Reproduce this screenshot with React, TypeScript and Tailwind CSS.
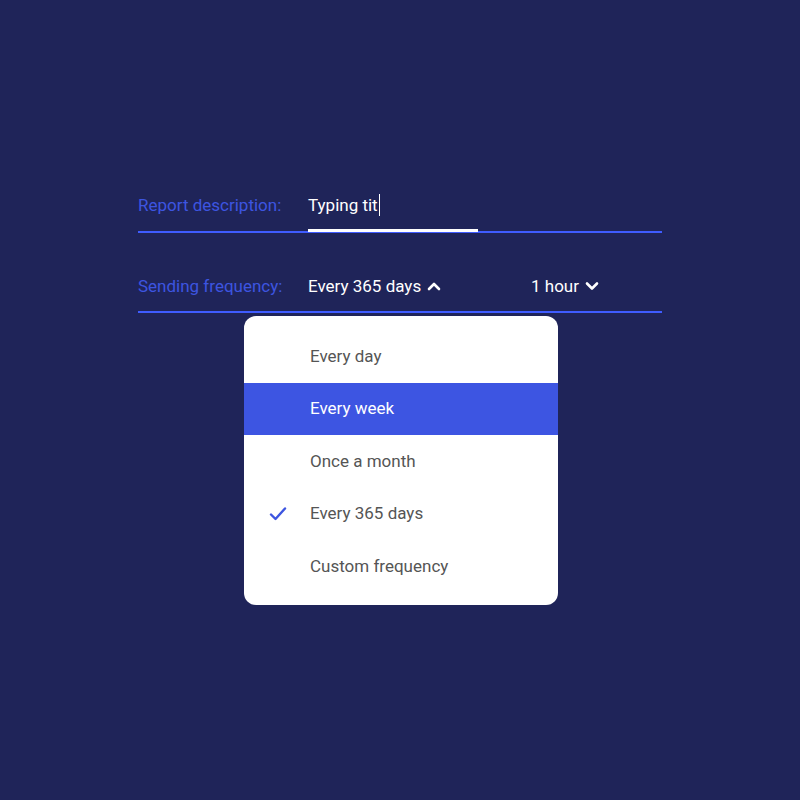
const options = ["Every day", "Every week", "Once a month", "Every 365 days", "Custom frequency"];

function ChevronUp() {
  return (
    <svg width="14" height="10" viewBox="0 0 14 10" fill="none">
      <path d="M2 8 L7 3 L12 8" stroke="white" strokeWidth="2.6" strokeLinecap="round" strokeLinejoin="round" />
    </svg>
  );
}

function ChevronDown() {
  return (
    <svg width="14" height="10" viewBox="0 0 14 10" fill="none">
      <path d="M2 2.5 L7 7.5 L12 2.5" stroke="white" strokeWidth="2.6" strokeLinecap="round" strokeLinejoin="round" />
    </svg>
  );
}

function Check() {
  return (
    <svg width="18" height="16" viewBox="0 0 18 16" fill="none">
      <path d="M2 8.5 L6.5 13 L16 2.5" stroke="#3d55e0" strokeWidth="2.4" strokeLinecap="round" strokeLinejoin="round" />
    </svg>
  );
}

export default function App() {
  return (
    <div
      className="h-[800px] w-[800px] bg-[#1f2459] pt-[193px] pl-[138px]"
      style={{ fontFamily: "Roboto, 'Liberation Sans', sans-serif" }}
    >
      <div className="w-[524px]">
        <div className="flex h-[38px] items-start text-[17px] leading-6">
          <div className="w-[170px] text-[#3d55e0]">Report description:</div>
          <div className="relative flex h-[38px] w-[170px] items-start text-white">
            <span>Typing tit</span>
            <span className="mt-[1px] ml-[1px] h-[22px] w-[1px] bg-white"></span>
            <span className="absolute -bottom-[1px] left-0 h-[3px] w-[170px] bg-white"></span>
          </div>
        </div>
        <div className="h-[1.5px] bg-[#3f5cff]"></div>
        <div className="flex h-[78.5px] items-start pt-[41px] text-[17px] leading-6">
          <div className="w-[170px] text-[#3d55e0]">Sending frequency:</div>
          <div className="flex w-[223px] items-center gap-[6px] text-white">
            <span>Every 365 days</span>
            <ChevronUp />
          </div>
          <div className="flex items-center gap-[6px] text-white">
            <span>1 hour</span>
            <ChevronDown />
          </div>
        </div>
        <div className="h-[1.5px] bg-[#3f5cff]"></div>
        <div className="mt-[3.5px] ml-[106px] w-[314px] rounded-[12px] bg-white pt-[14px] pb-[12px]">
          {options.map((opt) => (
            <div
              key={opt}
              className={
                opt === "Every week"
                  ? "flex h-[52.5px] items-center bg-[#3d55e2] text-[17px] text-white"
                  : "flex h-[52.5px] items-center text-[17px] text-[#555555]"
              }
            >
              <div className="flex w-[66px] justify-end pr-[23px]">
                {opt === "Every 365 days" ? <Check /> : null}
              </div>
              <span>{opt}</span>
            </div>
          ))}
        </div>
      </div>
    </div>
  );
}
